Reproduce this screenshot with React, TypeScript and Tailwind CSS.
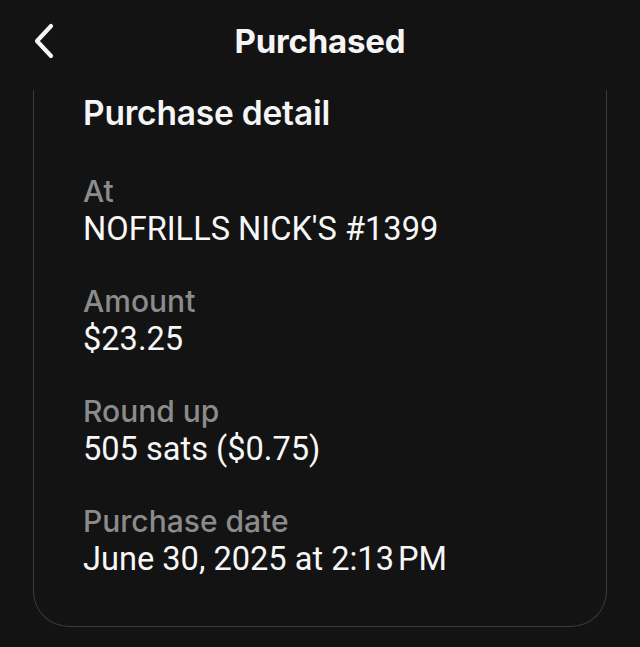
import React from 'react'

const DETAILS = [
  { label: 'At', value: "NOFRILLS NICK'S #1399" },
  { label: 'Amount', value: '$23.25' },
  { label: 'Round up', value: '505 sats ($0.75)' },
  { label: 'Purchase date', value: 'June 30, 2025 at 2:13\u202FPM' },
]

export default function App() {
  return (
    <div className="min-h-[647px] w-[640px] bg-[#131313] font-['Inter',sans-serif] text-white">
      <header className="grid h-[90px] grid-cols-[1fr_auto_1fr] items-start">
        <div className="pl-[33px] pt-[23px]">
          <svg width="22" height="36" viewBox="0 0 22 36" fill="none">
            <path
              d="M18 3 L4 18 L18 33"
              stroke="#f5f5f5"
              strokeWidth="4.2"
              strokeLinecap="round"
              strokeLinejoin="round"
            />
          </svg>
        </div>
        <h1 className="pt-[19px] text-[33px] font-bold leading-[44px] tracking-[-0.2px] text-[#f5f5f5]">
          Purchased
        </h1>
        <div />
      </header>

      <div className="mx-[33px] rounded-b-[36px] border-x border-b border-[#3b3b3b] pb-[48px] pl-[49px] pt-[3px]">
        <h2 className="text-[33.5px] font-semibold leading-[40px] tracking-[-0.2px] text-[#f5f5f5]">
          Purchase detail
        </h2>
        <div className="mt-[39px] flex flex-col gap-[34px]">
          {DETAILS.map((item, index) => (
            <div key={index}>
              <p className="text-[30px] font-medium leading-[38px] text-[#8b8b8b]">
                {item.label}
              </p>
              <p className="font-['Roboto',sans-serif] text-[32.6px] leading-[38px] text-[#f7f7f7]">
                {item.value}
              </p>
            </div>
          ))}
        </div>
      </div>
    </div>
  )
}
